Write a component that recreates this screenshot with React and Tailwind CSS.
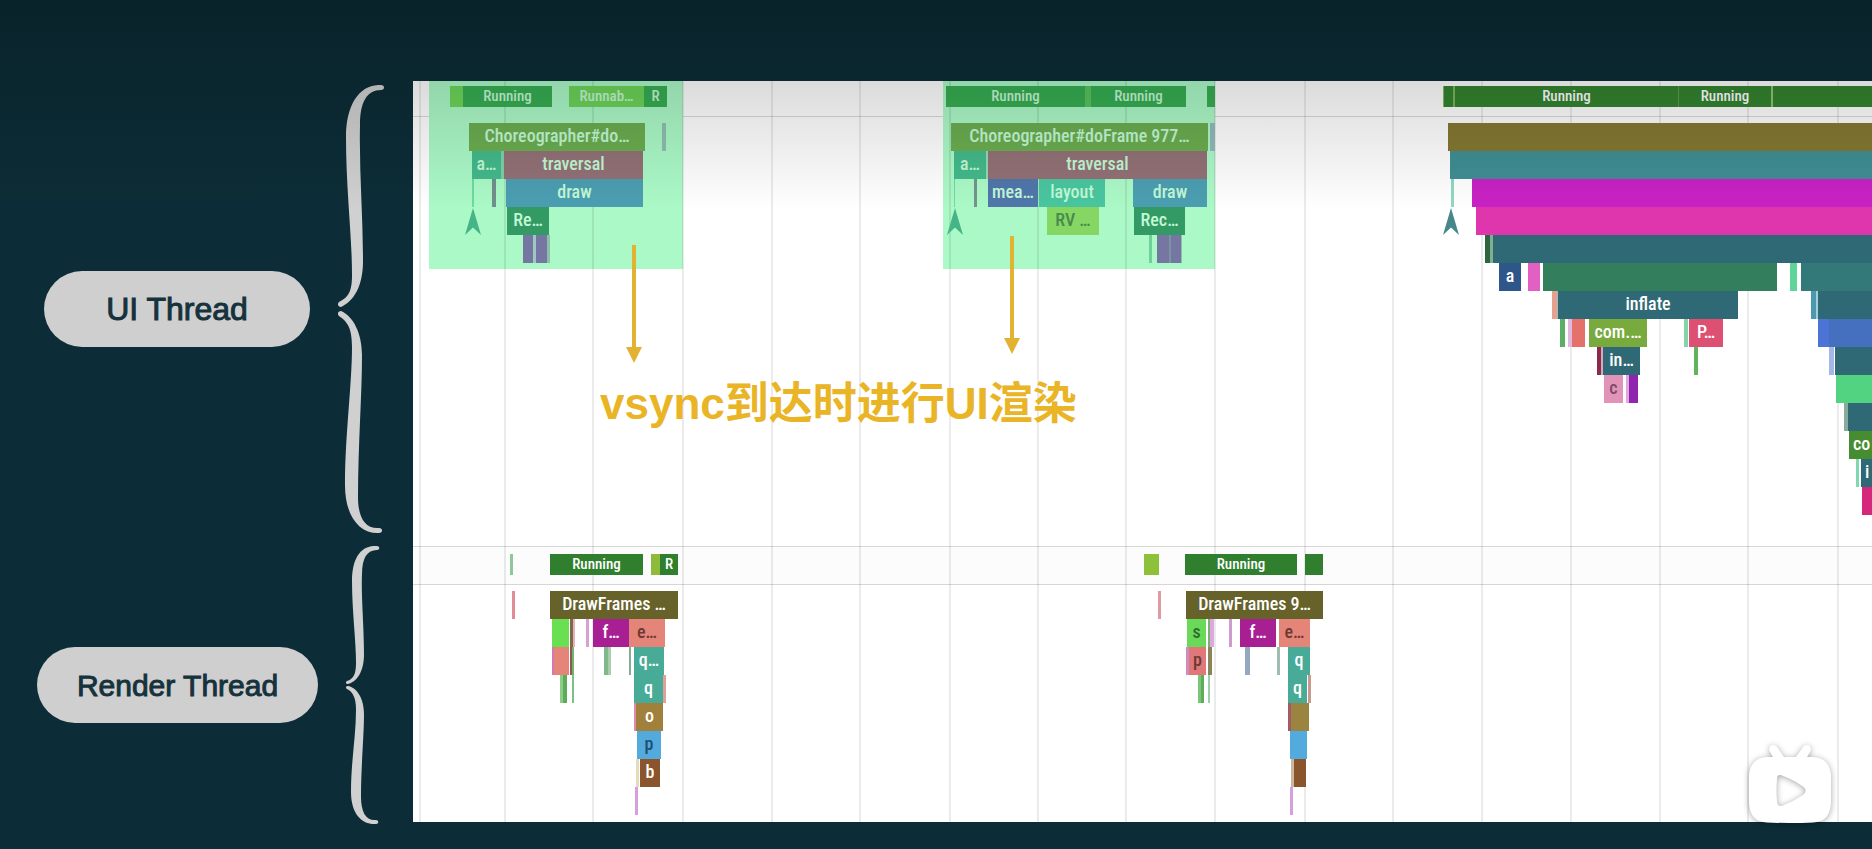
const ORIGIN = 413;

const GRID = [419, 504, 592, 682, 771, 859, 949, 1037, 1125, 1214, 1304, 1392, 1481, 1570, 1659, 1747, 1837];

const HIGHLIGHTS = [
  [429, 683],
  [943, 1215],
];

const END = 1960;
const PALE = '#c2f8d4';
const TEAL = '#2f6976';

/* Each slice: [start, end, colour, label, label colour, align] */
const UI_STATES = [
  [450, 463, '#6cd658'],
  [463, 552, '#36ae52', 'Running', PALE],
  [569, 644, '#6cd458', 'Runnab…', PALE],
  [644, 667, '#36ae52', 'R', PALE],
  [946, 1085, '#36ae52', 'Running', PALE],
  [1085, 1091, '#58c45e'],
  [1091, 1186, '#36ae52', 'Running', PALE],
  [1207, 1215, '#36ae52'],
  [1443, 1444, '#86b868'],
  [1444, 1453, '#33842f'],
  [1453, 1455, '#7cb45c'],
  [1455, 1678, '#33842f', 'Running'],
  [1678, 1679, '#5f9a52'],
  [1679, 1771, '#33842f', 'Running'],
  [1771, 1773, '#92c474'],
  [1773, END, '#33842f'],
];

const UI_ROWS = [
  [
    [469, 645, '#6bad50', 'Choreographer#do…', PALE],
    [662, 666, '#8fbfb2'],
    [951, 1208, '#6bad50', 'Choreographer#doFrame 977…', PALE],
    [1210, 1215, '#92baba'],
    [1448, END, '#847832'],
  ],
  [
    [472, 501, '#43ba8b', 'a…', PALE],
    [501, 504, '#7ed0a8'],
    [504, 643, '#927176', 'traversal', PALE],
    [954, 986, '#43ba8b', 'a…', PALE],
    [986, 988, '#96d8b4'],
    [988, 1207, '#927176', 'traversal', PALE],
    [1450, END, '#3f8e94'],
  ],
  [
    [472, 474, '#6ddaa3'],
    [492, 496, '#708f8e'],
    [506, 643, '#4b9eb1', 'draw', PALE],
    [954, 955, '#6ddaa3'],
    [974, 977, '#76938e'],
    [988, 1038, '#5077ab', 'mea…', PALE],
    [1039, 1105, '#49c69f', 'layout', PALE],
    [1133, 1207, '#4b9eb1', 'draw', PALE],
    [1451, 1454, '#8fd8c4'],
    [1472, END, '#c822c4'],
  ],
  [
    [507, 549, '#339a66', 'Re…', PALE],
    [1047, 1099, '#86d664', 'RV …', '#468a4e'],
    [1134, 1185, '#339a66', 'Rec…', PALE],
    [1476, END, '#df35ad'],
  ],
  [
    [523, 533, '#7676a2'],
    [533, 536, '#a0c8c0'],
    [536, 547, '#7676a2'],
    [547, 550, '#8dc0a9'],
    [1149, 1152, '#6fd09c'],
    [1157, 1169, '#7676a2'],
    [1169, 1171, '#7a94a6'],
    [1171, 1181, '#7676a2'],
    [1181, 1182, '#8dc0a9'],
    [1485, 1490, '#2d6540'],
    [1490, 1493, '#7fae95'],
    [1493, END, TEAL],
  ],
  [
    [1499, 1521, '#2f5689', 'a'],
    [1528, 1540, '#e260c4'],
    [1543, 1777, '#337f5d'],
    [1790, 1797, '#5ed39a'],
    [1801, END, '#34797a'],
  ],
  [
    [1552, 1556, '#e8a08c'],
    [1556, 1558, '#c0b0a8'],
    [1558, 1738, TEAL, 'inflate'],
    [1811, 1816, '#4e98ae'],
    [1816, 1818, '#9fd0dc'],
    [1818, END, TEAL],
  ],
  [
    [1560, 1565, '#5cae66'],
    [1568, 1572, '#e0b8e0'],
    [1572, 1585, '#e4716a'],
    [1589, 1647, '#78aa3e', 'com.…'],
    [1684, 1688, '#84d4aa'],
    [1689, 1723, '#de5072', 'P…'],
    [1818, 1829, '#4b74d6'],
    [1829, END, '#4570c0'],
  ],
  [
    [1597, 1601, '#8a2a4c'],
    [1601, 1603, '#d7a8bc'],
    [1603, 1640, TEAL, 'in…'],
    [1694, 1698, '#62b45c'],
    [1829, 1834, '#a3b8e4'],
    [1835, END, TEAL],
  ],
  [
    [1604, 1623, '#e293b8', 'c', '#7d4a68'],
    [1626, 1629, '#e0a8dc'],
    [1629, 1638, '#9026b0'],
    [1836, END, '#52d381'],
  ],
  [
    [1844, 1848, '#8bab9a'],
    [1848, END, TEAL],
  ],
  [[1849, END, '#468c30', 'co', '#ffffff', 'start']],
  [
    [1856, 1859, '#7fd8b2'],
    [1861, END, TEAL, 'i', '#ffffff', 'start'],
  ],
  [[1862, END, '#d5287c']],
];

const RENDER_STATES = [
  [510, 513, '#8fc79b'],
  [550, 643, '#2f7f2e', 'Running'],
  [651, 660, '#8fbb3a'],
  [660, 678, '#2f7f2e', 'R'],
  [1144, 1159, '#8fc03a'],
  [1185, 1297, '#2f7f2e', 'Running'],
  [1305, 1323, '#2f7f2e'],
];

const RENDER_ROWS = [
  [
    [512, 515, '#e08d98'],
    [550, 678, '#67622a', 'DrawFrames …'],
    [1158, 1161, '#e09aa4'],
    [1186, 1323, '#67622a', 'DrawFrames 9…'],
  ],
  [
    [552, 569, '#69e052'],
    [570, 573, '#7a6a4e'],
    [573, 575, '#eab0b8'],
    [586, 589, '#d9a0d4'],
    [593, 629, '#a81f94', 'f…'],
    [629, 665, '#e5857a', 'e…', '#6b3a32'],
    [1187, 1206, '#69d95a', 's', '#2f6a2c'],
    [1208, 1210, '#7ab070'],
    [1210, 1214, '#dda8e0'],
    [1229, 1232, '#cf9ad0'],
    [1240, 1276, '#a81f94', 'f…'],
    [1279, 1310, '#e5857a', 'e…', '#6b3a32'],
  ],
  [
    [552, 554, '#d07ab0'],
    [554, 569, '#e5857a'],
    [570, 572, '#8a5a50'],
    [572, 574, '#74b36a'],
    [604, 608, '#7fb88a'],
    [608, 611, '#a8ccac'],
    [629, 631, '#7fae98'],
    [634, 664, '#47ab97', 'q…'],
    [1186, 1189, '#d08ac0'],
    [1189, 1206, '#e0787a', 'p', '#6b3a32'],
    [1208, 1212, '#8a8558'],
    [1245, 1250, '#94a9c0'],
    [1277, 1280, '#9fbcb0'],
    [1288, 1310, '#47ab97', 'q'],
  ],
  [
    [560, 563, '#8bcc88'],
    [563, 567, '#5cad5a'],
    [572, 574, '#7ec08a'],
    [634, 663, '#47ab97', 'q'],
    [663, 666, '#e0a09a'],
    [1198, 1201, '#7cc47a'],
    [1201, 1204, '#5cad5a'],
    [1208, 1210, '#9ad0a8'],
    [1288, 1307, '#47ab97', 'q'],
    [1308, 1311, '#c79a90'],
  ],
  [
    [634, 636, '#e08ab0'],
    [636, 663, '#a0803a', 'o'],
    [1288, 1291, '#a05a6a'],
    [1291, 1309, '#9a8440'],
  ],
  [
    [637, 661, '#53aadd', 'p', '#1f4f6e'],
    [1290, 1307, '#53aadd'],
  ],
  [
    [636, 639, '#e4dcb8'],
    [640, 660, '#8a552c', 'b'],
    [1291, 1294, '#c8b8a0'],
    [1294, 1306, '#8a552c'],
  ],
  [
    [635, 638, '#d79ee0'],
    [1290, 1293, '#d79ee0'],
  ],
];

function Slice({ slice, small }) {
  const [start, end, color, label, ink = '#ffffff', align] = slice;
  return (
    <div
      className={
        'absolute inset-y-0 flex items-center overflow-hidden whitespace-nowrap font-medium ' +
        (small ? 'text-[15px] ' : 'pb-0.5 text-lg ') +
        (align === 'start' ? 'justify-start pl-1' : 'justify-center')
      }
      style={{ left: start - ORIGIN, width: end - start, backgroundColor: color, color: ink }}
    >
      {label}
    </div>
  );
}

function Track({ name, states, rows, className = '', headClass = '' }) {
  return (
    <section aria-label={name} className={className}>
      <div className={'border-b border-black/15 ' + headClass}>
        <div className="relative h-[21px]">
          {states.map((s) => (
            <Slice key={s[0]} slice={s} small />
          ))}
        </div>
      </div>
      <div className="pt-1.5">
        {rows.map((row, i) => (
          <div key={i} className="relative h-7">
            {row.map((s) => (
              <Slice key={s[0]} slice={s} />
            ))}
          </div>
        ))}
      </div>
    </section>
  );
}

function Marker({ x, color }) {
  return (
    <svg
      className="absolute top-[127px]"
      style={{ left: x - ORIGIN - 8, color }}
      width="16"
      height="28"
      viewBox="0 0 16 28"
      fill="currentColor"
      aria-hidden="true"
    >
      <path d="M8 0 16 27 8 19.500 0 27Z" />
    </svg>
  );
}

function Arrow({ x, className }) {
  return (
    <svg
      className={'absolute ' + className}
      style={{ left: x - ORIGIN - 8 }}
      width="16"
      height="118"
      viewBox="0 0 16 118"
      aria-hidden="true"
    >
      <path d="M6 0H10V102H16L8 118 0 102H6Z" fill="#e2b233" />
    </svg>
  );
}

function UiBrace() {
  return (
    <svg width="46" height="449" viewBox="0 0 46 449" className="shrink-0" aria-hidden="true">
      <g fill="#d0d0d1">
        <path d="M43 0C22 -1 8 19 8 52C8 105 14 150 14 190C14 206 11 212 1 217C-1 219 0 222 3 222C16 216 25 201 25 176C25 130 21 85 22 40C22 17 29 5 43 5C47 5 47 0 43 0Z" />
        <path d="M3 226C0 226 -1 229 1 231C10 237 14 244 14 262C14 300 7 350 7 400C7 432 22 449 41 448C45 448 45 443 41 443C26 444 20 431 20 412C20 360 24 310 24 270C24 248 15 231 3 226Z" />
      </g>
    </svg>
  );
}

function RenderBrace() {
  return (
    <svg width="34" height="279" viewBox="0 0 34 279" className="shrink-0" aria-hidden="true">
      <g fill="#d0d0d1">
        <path d="M31 0C15 -1 6 12 6 35C6 65 10 95 10 117C10 129 7 133 1 135C-1 136 0 138 2 138C10 136 18 127 18 108C18 80 15 50 16 28C16 12 21 4 31 4C34 4 34 0 31 0Z" />
        <path d="M2 140C0 140 -1 142 1 143C7 146 10 152 10 164C10 190 5 215 5 246C5 269 17 279 30 278C33 278 33 274 30 274C20 275 15 266 15 251C15 220 18 190 18 168C18 150 9 141 2 140Z" />
      </g>
    </svg>
  );
}

export default function App() {
  return (
    <main className="relative flex min-h-screen overflow-hidden bg-[#0c2d37] pt-[81px] pb-[26px] font-['Roboto_Condensed','Roboto','Noto_Sans_CJK_SC',sans-serif]">
      <aside className="flex w-[413px] shrink-0 flex-col font-['Liberation_Sans',Arial,sans-serif] text-[#16323c]">
        <div className="flex h-[466px] items-center gap-7 pb-2.5 pl-11">
          <div className="flex h-[76px] w-[266px] items-center justify-center rounded-full bg-[#cfcfd0] text-[32px] [-webkit-text-stroke:1px]">
            UI Thread
          </div>
          <UiBrace />
        </div>
        <div className="flex h-[276px] items-center gap-7 pl-[37px]">
          <div className="flex h-[76px] w-[281px] items-center justify-center rounded-full bg-[#cfcfd0] text-[30px] [-webkit-text-stroke:1px]">
            Render Thread
          </div>
          <RenderBrace />
        </div>
      </aside>

      <div className="relative min-w-0 flex-1 self-start overflow-hidden bg-white">
        {HIGHLIGHTS.map(([from, to]) => (
          <div
            key={from}
            className="absolute top-0 h-[188px] bg-[#abf9c7]"
            style={{ left: from - ORIGIN, width: to - from }}
          />
        ))}
        {GRID.map((x) => (
          <div key={x} className="absolute inset-y-0 w-0.5 bg-black/8" style={{ left: x - ORIGIN }} />
        ))}
        <Track name="UI Thread" states={UI_STATES} rows={UI_ROWS} headClass="pt-[5px] pb-[9px]" className="pb-[31px]" />
        <Track
          name="Render Thread"
          states={RENDER_STATES}
          rows={RENDER_ROWS}
          headClass="border-t bg-black/[0.01] pt-[7px] pb-[9px]"
          className="pb-[7px]"
        />
        <Marker x={473} color="#45b487" />
        <Marker x={955} color="#45b487" />
        <Marker x={1451} color="#46888a" />
        <Arrow x={634} className="top-[164px]" />
        <Arrow x={1012} className="top-[155px]" />
        <p className="absolute top-[291px] left-[187px] font-['Liberation_Sans','Noto_Sans_CJK_SC',sans-serif] text-[44px] leading-[64px] font-bold whitespace-nowrap text-[#e9b425]">
          vsync到达时进行UI渲染
        </p>
      </div>

      <div className="pointer-events-none absolute inset-x-0 top-0 h-[210px] bg-linear-to-b from-black/23 to-transparent" />

      <button type="button" aria-label="Play" className="absolute right-[41px] bottom-[26px] drop-shadow-[0_1px_3px_rgba(0,0,0,0.35)]">
        <svg width="82" height="78" viewBox="0 0 82 78" className="block overflow-visible" aria-hidden="true">
          <path
            fill="#fff"
            fillRule="evenodd"
            d="M35 12H47L54 2C59 -3 64 3 61 7L58 12H64Q81 13 82 31V58Q81 77 64 77.500Q41 78.500 18 77.500Q1 77 0 58V31Q1 13 18 12H24L21 7C18 3 23 -3 28 2ZM33 30.500C29 29 28 31 28 34Q27 45 28 56C28 60 30 62 34 60.500Q45 56 54 50C57.500 47.500 57.500 44 54 41.500Q45 35 33 30.500Z"
          />
        </svg>
      </button>
    </main>
  );
}
